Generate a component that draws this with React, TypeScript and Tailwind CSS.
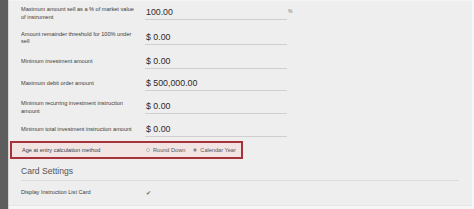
const label = 'w-[124px] shrink-0 pr-[9px] text-[5.6px] leading-[7.5px] text-[#3a3a3a]';
const input = 'w-[142px] h-[13px] flex items-center border-b border-[#cfcfcf] text-[8.8px] text-[#2a2a2a] pl-[1px]';

const rows = [
  { label: 'Maximum amount sell as a % of market value of instrument', value: '100.00', h: 'h-[25px]', suffix: '%' },
  { label: 'Amount remainder threshold for 100% under sell', value: '$ 0.00', h: 'h-[24px]' },
  { label: 'Minimum investment amount', value: '$ 0.00', h: 'h-[24px]' },
  { label: 'Maximum debit order amount', value: '$ 500,000.00', h: 'h-[20px]' },
  { label: 'Minimum recurring investment instruction amount', value: '$ 0.00', h: 'h-[27px]' },
  { label: 'Minimum total investment instruction amount', value: '$ 0.00', h: 'h-[18px]' },
];

export default function App() {
  return (
    <div
      className="w-[474px] h-[209px] flex bg-[#eeeeee] overflow-hidden"
      style={{ fontFamily: '"Liberation Sans", Arial, sans-serif' }}
    >
      <div className="w-[8px] shrink-0 bg-[#5d5d5d]" />
      <div className="w-[1px] shrink-0 bg-[#d4d4d4]" />
      <div className="flex-1 flex flex-col border-t border-[#f4f4f4]">
        {rows.map(r => (
          <div key={r.label} className={`${r.h} flex items-center pl-[12px]`}>
            <div className={label}>{r.label}</div>
            <div className={input}>{r.value}</div>
            {r.suffix && <span className="ml-[1px] -mt-[3px] text-[5px] text-[#777]">{r.suffix}</span>}
          </div>
        ))}

        <div className="mt-[2px] h-[18px] w-[233px] ml-[1px] flex items-center pl-[10px] border-2 border-[#a8323a] bg-[#f3e4e4]">
          <div className="w-[124px] shrink-0 text-[5.6px] text-[#3a3a3a]">Age at entry calculation method</div>
          <div className="flex items-center text-[5.6px] text-[#555]">
            <span className="w-[4px] h-[4px] rounded-full border border-[#b5b5b5] bg-white mr-[3px]" />
            <span>Round Down</span>
            <span className="ml-[8px] w-[4px] h-[4px] rounded-full border border-[#b5b5b5] bg-white mr-[3px] flex items-center justify-center">
              <span className="w-[2px] h-[2px] rounded-full bg-[#666]" />
            </span>
            <span>Calendar Year</span>
          </div>
        </div>

        <div className="ml-[12px] mr-[13px] mt-[3px] h-[19px] flex items-center border-b border-[#dcdcdc] text-[8.6px] text-[#555]">
          Card Settings
        </div>

        <div className="h-[24px] flex items-center pl-[12px]">
          <div className={label}>Display Instruction List Card</div>
          <span className="text-[6px] text-[#666] pl-[1px]">✔</span>
        </div>
        <div className="flex-1 bg-[#f6f6f6] border-t border-[#e6e6e6]" />
      </div>
      <div className="w-[2px] shrink-0 bg-[#f7f7f7]" />
    </div>
  );
}
